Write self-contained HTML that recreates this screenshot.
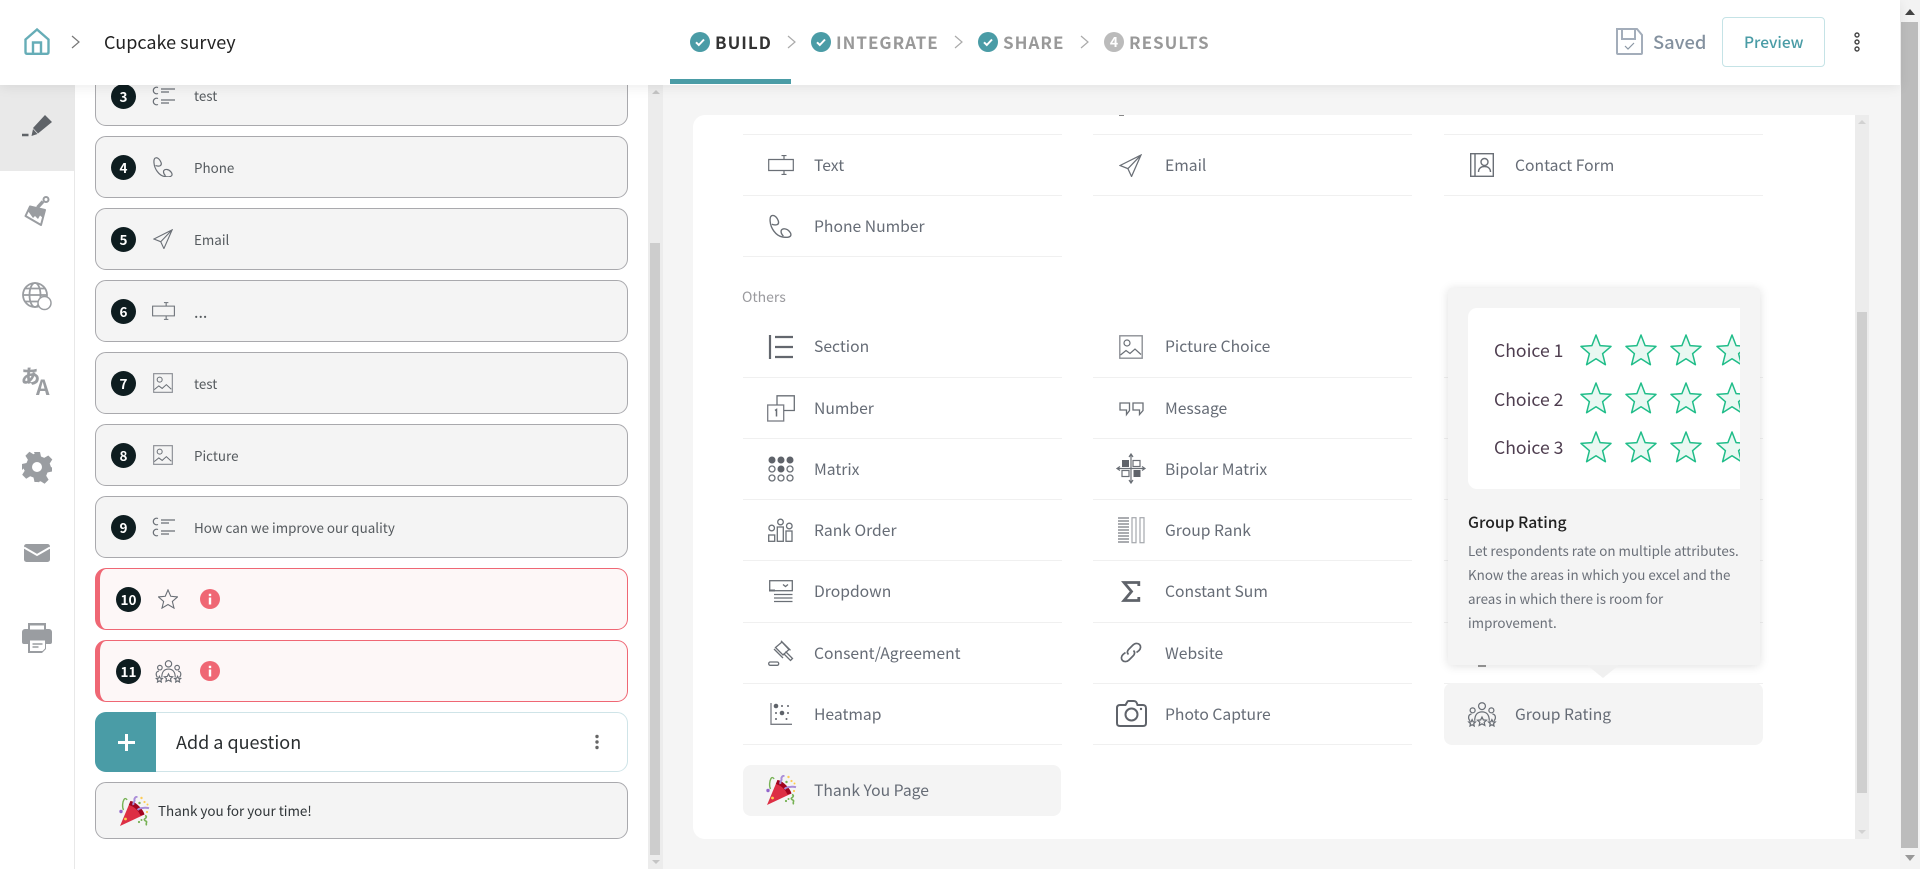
<!DOCTYPE html>
<html lang="en"><head><meta charset="utf-8"><title>Cupcake survey</title>
<style>
*{box-sizing:border-box}
html,body{margin:0;padding:0;width:1920px;height:869px;overflow:hidden;background:#fff;font-family:"Noto Sans CJK JP","Liberation Sans",sans-serif}
.a{position:absolute}
.t{position:absolute;white-space:nowrap;line-height:24px;height:24px}
svg{position:absolute;overflow:visible}
.s{fill:none;stroke:#6a6f76;stroke-width:1.2}
.card{position:absolute;left:95px;width:533px;height:62px;background:#f4f4f4;border:1.5px solid #a9a9ad;border-radius:11px}
.err{background:#fdf7f7;border:1.5px solid #ef6774;border-left:5px solid #ef6774}
.b{position:absolute;width:25px;height:25px;border-radius:50%;background:#0e1d20;color:#fff;font-size:13.5px;font-weight:700;text-align:center;line-height:25px}
.q{font-size:13.4px;color:#555a5e;left:194px;margin-top:-1px}
.r{font-size:15.7px;color:#666c76}
.l{position:absolute;height:1px;width:319px;background:#f0f0f0}
.n{font-size:17px;font-weight:700;letter-spacing:1px;color:#999}
.d{font-size:13.4px;color:#6b7079;left:1468px;margin-top:-1px}
.c{font-size:17.6px;color:#4e3d4f;left:1494px;margin-top:1px}
</style></head><body>
<svg width="0" height="0" style="position:absolute"><defs>
<symbol id="list" viewBox="0 0 23 20"><path class="s" d="M6 1.500A3.300 3.300 0 1 0 6 7.500M6 12.500A3.300 3.300 0 1 0 6 18.500M9 3h14M9 6h8M9 14h14M9 17h8"/></symbol>
<symbol id="phone" viewBox="0 0 20 20"><path class="s" d="M3 .8C1.500 1 .7 3 1 6c.5 6 5 12.500 10.500 13.500M3 .8c2-.3 4 2 5 4.500.6 1.700.2 3-1 3.500-1.300.5-3 .3-4.500-.3M11.500 19.500c2.500.5 7 .8 7.500-1.500.4-2-2-5-5-5.500-2-.3-3.500.5-3.500 2.300 0 1.700 1.200 3.200 2 4"/></symbol>
<symbol id="plane" viewBox="0 0 22 22"><path class="s" d="M21 1L1 11l7.500 3L12 21.500zM21 1L8.500 14"/></symbol>
<symbol id="text" viewBox="0 0 26 20"><path class="s" d="M16 4.500H.7v11H16M16 4.500h9.300v11H16M16 4.500V.5M16 15.500v4M13.500.5h5M13.500 19.500h5" stroke-width="1.300"/></symbol>
<symbol id="pic" viewBox="0 0 24 24"><rect class="s" x=".8" y=".8" width="22.400" height="22.400" style="stroke:#8d9096;stroke-width:1.400"/><circle class="s" cx="8" cy="8" r="3"/><path class="s" d="M1.500 20l5.500-4.500 4 3 5-4.500 6 5.500"/></symbol>
<symbol id="star" viewBox="0 0 22 22"><path class="s" d="M11 1l3 7 7.500.7-5.700 5 1.800 7.300L11 17.100 4.400 21l1.800-7.300L.5 8.700 8 8z"/></symbol>
<symbol id="group" viewBox="0 0 28 24"><g class="s"><circle cx="14" cy="4" r="3.300"/><circle cx="5" cy="8" r="2.400"/><circle cx="23" cy="8" r="2.400"/><path d="M7 18c0-6 3-8.500 7-8.500s7 2.500 7 8.500M2.500 18C.5 16 .5 12 4 11.500M25.500 18c2-2 2-6-1.500-6.500"/><path d="M14 14.500l1.300 2.700 3 .3-2.200 2 .6 3-2.700-1.500-2.700 1.500.6-3-2.200-2 3-.3zM4.500 17l1 2 2.200.2-1.600 1.500.4 2.300-2-1.200-2 1.200.4-2.300-1.600-1.500 2.200-.2zM23.500 17l1 2 2.200.2-1.600 1.500.4 2.300-2-1.200-2 1.200.4-2.300-1.600-1.500 2.200-.2z"/></g></symbol>
<symbol id="party" viewBox="0 0 30 30"><path fill="#dd2e44" d="M.5 30L11 5l14 13.500z"/><path fill="#a0041e" d="M11 5c4 0 13 8 14 13.500L21 19.500C19 15 15 10.500 9.300 9z"/><circle cx="6" cy="23" r="1.400" fill="#ffcc4d"/><path fill="none" stroke="#77b255" stroke-width="1.400" d="M4 14c-1.500-3-1-8 .5-10.500 1-1.500 2.500-1 3 .5"/><path fill="none" stroke="#aa8dd8" stroke-width="2" d="M14 9c-1-2.500 1.500-3 1-5-.3-1.500.7-3 3-3.500M18 14c2-2 4-2 7-2.200 1-.1 3 0 4.500.4"/><path fill="none" stroke="#77b255" stroke-width="1.600" d="M25.500 19.500c2.500 1 1 2.700-.2 3.300s0 2 1.400 2.500-1 2.500 .5 4"/><circle cx="1.500" cy="15.500" r="1.700" fill="#9266cc"/><circle cx="22" cy="2" r="1.200" fill="#fdcb58"/><circle cx="25" cy="6" r="1.100" fill="#fdcb58"/><circle cx="20" cy="7" r="1.200" fill="#77b255"/><circle cx="28" cy="8.500" r="1" fill="#ffcc4d"/><circle cx="19.500" cy="26" r="1.100" fill="#77b255"/><circle cx="22" cy="24" r="1" fill="#77b255"/><circle cx="27.500" cy="16" r="1.100" fill="#fdcb58"/></symbol>
<symbol id="gstar" viewBox="0 0 32 32"><path fill="#e9f8f2" stroke="#20bd89" stroke-width="1.500" stroke-linejoin="round" d="M16 1l4.100 10.600L31 12.400l-8.400 7.300 2.800 11L16 24.700 6.600 30.700l2.800-11L1 12.400l10.900-.8z"/></symbol>
<symbol id="info" viewBox="0 0 20 24"><ellipse cx="10" cy="12" rx="10" ry="10" fill="#ef6774"/><path fill="#fff" d="M8.800 10.500h2.400v7H8.800zM8.800 6.800h2.400v2.300H8.800z"/></symbol>
<symbol id="chk" viewBox="0 0 20 20"><circle cx="10" cy="10" r="10" fill="#4a9ca6"/><path fill="none" stroke="#fff" stroke-width="2" d="M6 10.300l2.800 2.700L14 7.500"/></symbol>
<symbol id="chev" viewBox="0 0 9 14"><path fill="none" stroke="#aaa" stroke-width="1.200" d="M1 1l7 6-7 6"/></symbol>
</defs></svg>

<!-- main area bg -->
<div class="a" style="left:662px;top:85px;width:1238px;height:784px;background:#f5f5f5"></div>
<!-- left scrollbar -->
<div class="a" style="left:648px;top:85px;width:15px;height:784px;background:#ececec"></div>
<div class="a" style="left:650px;top:243px;width:10px;height:612px;background:#cdcdcd"></div>
<div class="a" style="left:652px;top:90px;border:4px solid transparent;border-bottom:4px solid #c4c4c4;border-top:0"></div>
<div class="a" style="left:652px;top:860px;border:4px solid transparent;border-top:4px solid #c4c4c4;border-bottom:0"></div>

<!-- rail -->
<div class="a" style="left:0;top:85px;width:75px;height:784px;background:#fff;border-right:1px solid #e8e8e8"></div>
<div class="a" style="left:0;top:85px;width:74px;height:86px;background:#e9e9e9"></div>
<svg style="left:22px;top:115px" width="31" height="23" viewBox="0 0 31 23"><path fill="#5f6368" d="M23 0l7 7-14 11.500-5-5.500zM9.500 21l1.500-7 4.500 5zM0 18.700h6.500v2.600H0z"/></svg>
<svg style="left:24px;top:196px" width="27" height="30" viewBox="0 0 27 30"><path fill="#fff" stroke="#9a9da1" stroke-width="2" stroke-linejoin="round" d="M6 10.500L21 14l-4 15L1.500 20z"/><path fill="#9a9da1" d="M6 10.500L21 14l-2 8-3-2.500-2 3.500-3-3-2 2-5-7z"/><path stroke="#9a9da1" stroke-width="3.500" d="M13.500 11.500L19 5.500"/><circle cx="22" cy="3.500" r="2.500" fill="none" stroke="#9a9da1" stroke-width="2"/></svg>
<svg style="left:22px;top:282px" width="30" height="29" viewBox="0 0 30 29"><g fill="none" stroke="#9a9da1" stroke-width="1.800"><circle cx="13" cy="13" r="12"/><ellipse cx="13" cy="13" rx="5.500" ry="12"/><path d="M1 13h24M3 6.500h20M3 19.500h20"/></g><circle cx="22.500" cy="21" r="6.500" fill="#fff" stroke="#9a9da1" stroke-width="1.500"/></svg>
<div class="t" style="left:21px;top:364px;font-size:19px;font-weight:700;color:#9a9da1;line-height:24px;-webkit-text-stroke:.5px #9a9da1">あ</div>
<div class="t" style="left:36px;top:375px;font-size:21px;font-weight:700;color:#9a9da1;line-height:24px">A</div>
<svg style="left:22px;top:452px" width="30" height="30" viewBox="0 0 30 30"><path fill="#9a9da1" d="M12 0h6l1 4.500 3.200 1.400L26.300 3.500l4 4-2.600 4 1.300 3.500 1 .5v4l-4.500 1-1.300 3.200 2.400 4-4 4-4-2.500-3.300 1.300L17.500 30h-5l-1-4.500-3.300-1.300-4 2.500-4-4 2.500-4L1.500 16.500 0 18v-6l4.500-1 1.400-3.200-2.500-4 4-4 4 2.500 1.300-.5z"/><circle cx="15" cy="15" r="5" fill="#fff"/></svg>
<svg style="left:24px;top:544px" width="26" height="18" viewBox="0 0 26 18"><rect width="26" height="18" rx="2.500" fill="#9a9da1"/><path fill="none" stroke="#fff" stroke-width="2" d="M0 3.500l13 7.500 13-7.500"/></svg>
<svg style="left:22px;top:623px" width="30" height="30" viewBox="0 0 30 30"><path fill="#9a9da1" d="M6 0h18v6h3a3 3 0 0 1 3 3v10a2 2 0 0 1-2 2h-4v5l-4 4H6v-9H2a2 2 0 0 1-2-2V9a3 3 0 0 1 3-3h3z"/><rect x="8" y="2.500" width="14" height="4" fill="#fff"/><path fill="#fff" d="M8 17.500h15v8l-2.500 2.500H8z"/><path stroke="#9a9da1" stroke-width="1.500" d="M10.500 21h10M10.500 24h6"/></svg>

<!-- questions -->
<div class="card" style="top:64px"></div>
<div class="b" style="left:111px;top:84px">3</div><svg style="left:152px;top:86px" width="23" height="20"><use href="#list"/></svg><div class="t q" style="top:84px">test</div>

<div class="card" style="top:136px"></div>
<div class="b" style="left:111px;top:155px">4</div><svg style="left:153px;top:157px" width="20" height="20"><use href="#phone"/></svg><div class="t q" style="top:156px">Phone</div>

<div class="card" style="top:208px"></div>
<div class="b" style="left:111px;top:227px">5</div><svg style="left:153px;top:229px" width="20" height="20"><use href="#plane"/></svg><div class="t q" style="top:228px">Email</div>

<div class="card" style="top:280px"></div>
<div class="b" style="left:111px;top:299px">6</div><svg style="left:152px;top:302px" width="23" height="18"><use href="#text"/></svg><div class="t q" style="top:300px;font-size:16px">...</div>

<div class="card" style="top:352px"></div>
<div class="b" style="left:111px;top:371px">7</div><svg style="left:153px;top:373px" width="20" height="20"><use href="#pic"/></svg><div class="t q" style="top:372px">test</div>

<div class="card" style="top:424px"></div>
<div class="b" style="left:111px;top:443px">8</div><svg style="left:153px;top:445px" width="20" height="20"><use href="#pic"/></svg><div class="t q" style="top:444px">Picture</div>

<div class="card" style="top:496px"></div>
<div class="b" style="left:111px;top:515px">9</div><svg style="left:152px;top:517px" width="23" height="20"><use href="#list"/></svg><div class="t q" style="top:516px">How can we improve our quality</div>

<div class="card err" style="top:568px"></div>
<div class="b" style="left:116px;top:587px">10</div><svg style="left:158px;top:589px" width="20" height="20"><use href="#star"/></svg><svg style="left:200px;top:587px" width="20" height="24"><use href="#info"/></svg>

<div class="card err" style="top:640px"></div>
<div class="b" style="left:116px;top:659px">11</div><svg style="left:155px;top:660px" width="27" height="23"><use href="#group"/></svg><svg style="left:200px;top:659px" width="20" height="24"><use href="#info"/></svg>

<div class="a" style="left:95px;top:712px;width:533px;height:60px;background:#fff;border:1.5px solid #cfe4e8;border-radius:11px"></div>
<div class="a" style="left:95px;top:712px;width:61px;height:60px;background:#4a9ca6;border-radius:11px 0 0 11px"></div>
<svg style="left:118px;top:734px" width="17" height="17"><path stroke="#fff" stroke-width="3" d="M8.500 0v17M0 8.500h17"/></svg>
<div class="t" style="left:176px;top:730px;font-size:18px;color:#2a2e30">Add a question</div>
<svg style="left:595px;top:734px" width="4" height="16"><circle cx="2" cy="2.500" r="1.700" fill="#666"/><circle cx="2" cy="8" r="1.700" fill="#666"/><circle cx="2" cy="13.500" r="1.700" fill="#666"/></svg>

<div class="a" style="left:95px;top:782px;width:533px;height:57px;background:#f4f4f4;border:1.5px solid #a9a9ad;border-radius:11px"></div>
<svg style="left:119px;top:796px" width="31" height="30"><use href="#party"/></svg>
<div class="t" style="left:158px;top:798px;font-size:13.45px;color:#303538">Thank you for your time!</div>

<!-- content card -->
<div class="a" style="left:693px;top:115px;width:1176px;height:724px;background:#fff;border-radius:12px 0 0 12px"></div>
<div class="a" style="left:1855px;top:115px;width:14px;height:724px;background:#ececec"></div>
<div class="a" style="left:1857px;top:312px;width:10px;height:481px;background:#cfcfcf"></div>
<div class="a" style="left:1858px;top:120px;border:4px solid transparent;border-bottom:4px solid #d2d2d2;border-top:0"></div>
<div class="a" style="left:1858px;top:830px;border:4px solid transparent;border-top:4px solid #d2d2d2;border-bottom:0"></div>
<div class="a" style="left:1119px;top:115px;width:5px;height:1px;background:#888"></div>

<div class="l" style="left:743px;top:134px"></div><div class="l" style="left:1093px;top:134px"></div><div class="l" style="left:1444px;top:134px"></div>
<div class="l" style="left:743px;top:195px"></div><div class="l" style="left:1093px;top:195px"></div><div class="l" style="left:1444px;top:195px"></div>
<div class="l" style="left:743px;top:256px"></div>

<svg style="left:768px;top:155px" width="26" height="20"><use href="#text"/></svg><div class="t r" style="left:814px;top:153px">Text</div>
<svg style="left:1119px;top:154px" width="23" height="23"><use href="#plane"/></svg><div class="t r" style="left:1165px;top:153px">Email</div>
<svg style="left:1470px;top:153px" width="24" height="24" viewBox="0 0 24 24"><g class="s" style="stroke-width:1.400"><rect x=".7" y=".7" width="22.600" height="22.600"/><path d="M5 .7v22.600M8.500 19c0-4 3-5.500 6-5.500s6 1.500 6 5.500"/><circle cx="14.500" cy="9" r="3.500"/></g></svg><div class="t r" style="left:1515px;top:153px">Contact Form</div>
<svg style="left:769px;top:214px" width="23" height="24"><use href="#phone"/></svg><div class="t r" style="left:814px;top:214px">Phone Number</div>

<div class="t" style="left:742px;top:285px;font-size:14px;color:#9a9a9e">Others</div>

<!-- lines others -->
<div class="l" style="left:743px;top:377px"></div><div class="l" style="left:1093px;top:377px"></div>
<div class="l" style="left:743px;top:438px"></div><div class="l" style="left:1093px;top:438px"></div>
<div class="l" style="left:743px;top:499px"></div><div class="l" style="left:1093px;top:499px"></div>
<div class="l" style="left:743px;top:560px"></div><div class="l" style="left:1093px;top:560px"></div>
<div class="l" style="left:743px;top:622px"></div><div class="l" style="left:1093px;top:622px"></div>
<div class="l" style="left:743px;top:683px"></div><div class="l" style="left:1093px;top:683px"></div>
<div class="l" style="left:743px;top:744px"></div><div class="l" style="left:1093px;top:744px"></div>

<!-- col 1 -->
<svg style="left:769px;top:335px" width="24" height="24" viewBox="0 0 24 24"><path stroke="#63676e" stroke-width="2.200" d="M1 0v24M6 2h18M6 12h18M6 22h18"/></svg><div class="t r" style="left:814px;top:334px">Section</div>
<svg style="left:767px;top:395px" width="28" height="27" viewBox="0 0 28 27"><g class="s" style="stroke-width:1.300"><rect x=".7" y="10" width="16" height="16" style="stroke:#7a7d84"/><path d="M10 10V.8h17.300V15.500H17"/><path d="M8 15.500l1.500-1v7" style="stroke-width:1.500"/></g></svg><div class="t r" style="left:814px;top:396px">Number</div>
<svg style="left:768px;top:456px" width="26" height="26" viewBox="0 0 26 26"><g fill="#5f636a"><circle cx="4" cy="4" r="3.500"/><circle cx="13" cy="4" r="3.500"/><circle cx="22" cy="4" r="3.500"/><circle cx="13" cy="13" r="3.500"/></g><g class="s" style="stroke-width:1.300"><circle cx="4" cy="13" r="3"/><circle cx="22" cy="13" r="3"/><circle cx="4" cy="22" r="3"/><circle cx="13" cy="22" r="3"/><circle cx="22" cy="22" r="3"/></g></svg><div class="t r" style="left:814px;top:457px">Matrix</div>
<svg style="left:768px;top:519px" width="25" height="23" viewBox="0 0 25 23"><g class="s" style="stroke-width:1.300"><circle cx="12.500" cy="3" r="2.800"/><circle cx="3.700" cy="9" r="2.800"/><circle cx="21.300" cy="7" r="2.800"/><rect x=".7" y="16" width="6" height="6.300"/><rect x="9.300" y="8" width="6" height="14.300"/><rect x="18" y="12" width="6" height="10.300"/></g></svg><div class="t r" style="left:814px;top:518px">Rank Order</div>
<svg style="left:769px;top:580px" width="24" height="23" viewBox="0 0 24 23"><g class="s" style="stroke-width:1.300"><rect x=".7" y=".7" width="22.600" height="10"/><path d="M14 4.500l2.500 2 2.500-2M5 14.500h18.500M5 18h18.500M5 21.500h18.500"/></g><rect y="9.500" width="6" height="2" fill="#6a6f76"/></svg><div class="t r" style="left:814px;top:579px">Dropdown</div>
<svg style="left:768px;top:640px" width="26" height="26" viewBox="0 0 26 26"><g class="s" style="stroke-width:1.300"><rect x=".7" y="22" width="10" height="3.300" rx="1.500"/><path d="M7.500 7.500L14 2l7 7.500-6 5.500zM6 9l9 9M13 .8l9.500 9.500M17.500 11.500l7 7-2 2-7-7"/></g></svg><div class="t r" style="left:814px;top:641px">Consent/Agreement</div>
<svg style="left:770px;top:703px" width="22" height="22" viewBox="0 0 22 22"><path fill="none" stroke="#7a7d84" stroke-width="1.300" d="M1 0v21.300h21"/><g fill="#5f636a"><circle cx="6" cy="3" r="2.300"/><circle cx="12" cy="3" r="1"/><circle cx="18" cy="3" r="1"/><circle cx="6" cy="10" r="1"/><circle cx="12" cy="10" r="2.300"/><circle cx="18" cy="10" r="1"/><circle cx="6" cy="16" r="1"/><circle cx="16.500" cy="16" r="1"/></g></svg><div class="t r" style="left:814px;top:702px">Heatmap</div>

<div class="a" style="left:743px;top:765px;width:318px;height:51px;background:#f4f4f4;border-radius:8px"></div>
<svg style="left:766px;top:775px" width="31" height="30"><use href="#party"/></svg>
<div class="t r" style="left:814px;top:778px">Thank You Page</div>

<!-- col 2 -->
<svg style="left:1119px;top:335px" width="24" height="24"><use href="#pic"/></svg><div class="t r" style="left:1165px;top:334px">Picture Choice</div>
<svg style="left:1119px;top:402px" width="25" height="13" viewBox="0 0 25 13"><path class="s" d="M1 1h9.500v7.500l-3 4V8H1zM14 1h10v7.500l-3.500 4V8H14z" style="stroke-width:1.300"/></svg><div class="t r" style="left:1165px;top:396px">Message</div>
<svg style="left:1117px;top:454px" width="28" height="29" viewBox="0 0 28 29"><path class="s" d="M14 0v29M0 14.500h28M12 3l2-3 2 3M12 26l2 3 2-3M3 12.500L0 14.500l3 2M25 12.500l3 2-3 2"/><rect x="5" y="6" width="7" height="7" fill="#5f636a"/><rect x="16.500" y="16" width="7" height="7" fill="#5f636a"/><rect class="s" x="16" y="6.500" width="7" height="6"/><rect class="s" x="5" y="16.500" width="7" height="6"/></svg><div class="t r" style="left:1165px;top:457px">Bipolar Matrix</div>
<svg style="left:1118px;top:517px" width="27" height="26" viewBox="0 0 27 26"><path stroke="#8d9096" stroke-width="1.500" d="M0 1h11M0 4h11M0 7h11M0 10h11M0 13h11M0 16h11M0 19h11M0 22h11M0 25h11"/><rect class="s" x="14" y=".7" width="4" height="25" style="stroke:#a5a8ad"/><rect class="s" x="22" y=".7" width="4" height="25" style="stroke:#a5a8ad"/></svg><div class="t r" style="left:1165px;top:518px">Group Rank</div>
<svg style="left:1122px;top:581px" width="18" height="21" viewBox="0 0 18 21"><path fill="none" stroke="#5f636a" stroke-width="2.800" d="M16.800 5V1.500H2L9.500 10.500 2 19.500h14.800V16"/></svg><div class="t r" style="left:1165px;top:579px">Constant Sum</div>
<svg style="left:1120px;top:642px" width="22" height="21" viewBox="0 0 22 21"><path fill="none" stroke="#63676e" stroke-width="1.700" d="M8.500 12.500c-2-2-1-4 .5-5.500l4-4c2-2 5-2 6.500-.5s1.500 4-.5 6L16.500 10.500M13.500 8.500c2 2 1 4-.5 5.500l-4 4c-2 2-5 2-6.500.5S1 14.500 3 12.500l2.500-2"/></svg><div class="t r" style="left:1165px;top:641px">Website</div>
<svg style="left:1116px;top:700px" width="31" height="27" viewBox="0 0 31 27"><path fill="none" stroke="#5f636a" stroke-width="2" d="M9.500 5l2-3.500c.3-.4.6-.5 1-.5h5c2 0 3 .5 4 4h5c2.500 0 3.500 1 3.500 3.500V23c0 2.300-1 3-3 3H4c-2 0-3-.7-3-3V8c0-2 1-3 3-3z"/><circle cx="15.500" cy="14.500" r="6" fill="none" stroke="#5f636a" stroke-width="2"/><circle cx="25" cy="9" r="1.200" fill="#5f636a"/></svg><div class="t r" style="left:1165px;top:702px">Photo Capture</div>

<!-- group rating row + tooltip -->
<div class="l" style="left:1444px;top:377px"></div><div class="l" style="left:1444px;top:438px"></div><div class="l" style="left:1444px;top:499px"></div><div class="l" style="left:1444px;top:560px"></div><div class="l" style="left:1444px;top:622px"></div><div class="l" style="left:1444px;top:683px"></div>
<div class="a" style="left:1444px;top:683px;width:319px;height:62px;background:#f4f4f4;border-radius:8px"></div>
<svg style="left:1467px;top:702px" width="30" height="25"><use href="#group"/></svg>
<div class="t r" style="left:1515px;top:702px">Group Rating</div>
<div class="a" style="left:1478px;top:665px;width:8px;height:1.500px;background:#999"></div>

<div class="a" style="left:1448px;top:288px;width:312px;height:377px;background:#f4f4f4;border-radius:4px;box-shadow:0 1px 10px rgba(0,0,0,.13)"></div>
<div class="a" style="left:1587px;top:665px;width:0;height:0;border-left:16.500px solid transparent;border-right:16.500px solid transparent;border-top:13px solid #f0f0f0"></div>
<div class="a" style="left:1468px;top:308px;width:272px;height:181px;background:#fff;border-radius:9px 0 0 9px;overflow:hidden">
<svg style="left:112px;top:26px" width="32" height="32"><use href="#gstar"/></svg><svg style="left:157px;top:26px" width="32" height="32"><use href="#gstar"/></svg><svg style="left:202px;top:26px" width="32" height="32"><use href="#gstar"/></svg><svg style="left:248px;top:26px" width="32" height="32"><use href="#gstar"/></svg>
<svg style="left:112px;top:74px" width="32" height="32"><use href="#gstar"/></svg><svg style="left:157px;top:74px" width="32" height="32"><use href="#gstar"/></svg><svg style="left:202px;top:74px" width="32" height="32"><use href="#gstar"/></svg><svg style="left:248px;top:74px" width="32" height="32"><use href="#gstar"/></svg>
<svg style="left:112px;top:123px" width="32" height="32"><use href="#gstar"/></svg><svg style="left:157px;top:123px" width="32" height="32"><use href="#gstar"/></svg><svg style="left:202px;top:123px" width="32" height="32"><use href="#gstar"/></svg><svg style="left:248px;top:123px" width="32" height="32"><use href="#gstar"/></svg>
</div>
<div class="t c" style="top:338px">Choice 1</div>
<div class="t c" style="top:387px">Choice 2</div>
<div class="t c" style="top:435px">Choice 3</div>
<div class="t" style="left:1468px;top:510px;font-size:15.7px;font-weight:500;color:#222">Group Rating</div>
<div class="t d" style="top:539px">Let respondents rate on multiple attributes.</div>
<div class="t d" style="top:563px">Know the areas in which you excel and the</div>
<div class="t d" style="top:587px">areas in which there is room for</div>
<div class="t d" style="top:611px">improvement.</div>

<!-- main scrollbar -->
<div class="a" style="left:1900px;top:0;width:20px;height:869px;background:#f3f3f3"></div>
<div class="a" style="left:1901px;top:22px;width:17px;height:826px;background:#bcbcbc"></div>
<div class="a" style="left:1905px;top:9px;border:5px solid transparent;border-bottom:6px solid #444;border-top:0"></div>
<div class="a" style="left:1905px;top:855px;border:5px solid transparent;border-top:6px solid #999;border-bottom:0"></div>

<!-- header -->
<div class="a" style="left:0;top:0;width:1900px;height:85px;background:#fff;box-shadow:0 2px 12px rgba(0,0,0,.08)"></div>
<svg style="left:24px;top:28px" width="26" height="27" viewBox="0 0 26 27"><path fill="none" stroke="#66adb7" stroke-width="2.400" d="M13 1.500L1.500 11.500V24c0 1.200.5 1.800 1.800 1.800h19.400c1.300 0 1.800-.6 1.800-1.800V11.500zM9 25.800V14.500h8V25.800"/></svg>
<svg style="left:71px;top:35px" width="9" height="14" viewBox="0 0 9 14"><path fill="none" stroke="#777" stroke-width="1.200" d="M1 1l7 6-7 6"/></svg>
<div class="t" style="left:104px;top:30px;font-size:18px;color:#222">Cupcake survey</div>

<svg style="left:690px;top:32px" width="20" height="20"><use href="#chk"/></svg><div class="t n" style="left:715px;top:30px;color:#333">BUILD</div>
<svg style="left:787px;top:35px" width="9" height="14"><use href="#chev"/></svg>
<svg style="left:811px;top:32px" width="20" height="20"><use href="#chk"/></svg><div class="t n" style="left:836px;top:30px">INTEGRATE</div>
<svg style="left:954px;top:35px" width="9" height="14"><use href="#chev"/></svg>
<svg style="left:978px;top:32px" width="20" height="20"><use href="#chk"/></svg><div class="t n" style="left:1003px;top:30px">SHARE</div>
<svg style="left:1080px;top:35px" width="9" height="14"><use href="#chev"/></svg>
<div class="a" style="left:1104px;top:32px;width:20px;height:20px;border-radius:50%;background:#bbb;color:#fff;font-size:14px;font-weight:700;text-align:center;line-height:20px">4</div><div class="t n" style="left:1129px;top:30px">RESULTS</div>
<div class="a" style="left:670px;top:79px;width:121px;height:5px;background:#4a9ca6"></div>

<svg style="left:1616px;top:28px" width="27" height="27" viewBox="0 0 27 27"><path fill="none" stroke="#a3adba" stroke-width="2" d="M1 1h20l5 6v18a1 1 0 0 1-1 1H2a1 1 0 0 1-1-1zM6 1v10h13V1"/><path fill="none" stroke="#8a96a3" stroke-width="1.200" d="M9 18l3 3 6-6"/></svg>
<div class="t" style="left:1653px;top:30px;font-size:18.300px;font-weight:500;color:#84919f">Saved</div>
<div class="a" style="left:1722px;top:17px;width:103px;height:50px;border:1.500px solid #c5e3e6;border-radius:4px"></div>
<div class="t" style="left:1744px;top:30px;font-size:15.5px;font-weight:500;color:#4a9ca6">Preview</div>
<svg style="left:1854px;top:32px" width="6" height="20"><g fill="none" stroke="#444" stroke-width="1.400"><circle cx="3" cy="3" r="2"/><circle cx="3" cy="10" r="2"/><circle cx="3" cy="17" r="2"/></g></svg>
</body></html>
